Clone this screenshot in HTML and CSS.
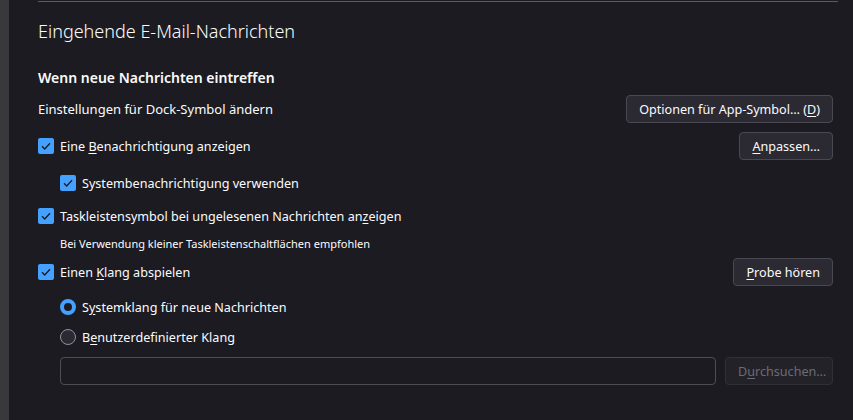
FILE: index.html
```html
<!DOCTYPE html>
<html lang="de">
<head>
<meta charset="utf-8">
<title>Einstellungen</title>
<link rel="stylesheet" href="styles.css">
</head>
<body>
<div class="sidebar"></div>
<main class="pane">
  <div class="rule"></div>
  <h1 class="title">Eingehende E-Mail-Nachrichten</h1>
  <h2 class="subtitle">Wenn neue Nachrichten eintreffen</h2>

  <div class="row r-dock">
    <span class="label">Einstellungen für Dock-Symbol ändern</span>
    <button class="btn">Optionen für App-Symbol… (<u>D</u>)</button>
  </div>

  <div class="row r-alert">
    <label class="check"><span class="box"><svg viewBox="0 0 16 16"><path d="M4 8.2l2.7 2.8L12 5.2"/></svg></span><span class="text">Eine <u>B</u>enachrichtigung anzeigen</span></label>
    <button class="btn"><u>A</u>npassen…</button>
  </div>

  <div class="row r-sys indent">
    <label class="check"><span class="box"><svg viewBox="0 0 16 16"><path d="M4 8.2l2.7 2.8L12 5.2"/></svg></span><span class="text">Systembenachrichtigung verwenden</span></label>
  </div>

  <div class="row r-task">
    <label class="check"><span class="box"><svg viewBox="0 0 16 16"><path d="M4 8.2l2.7 2.8L12 5.2"/></svg></span><span class="text">Taskleistensymbol bei ungelesenen Nachrichten an<u>z</u>eigen</span></label>
  </div>

  <div class="hint">Bei Verwendung kleiner Taskleistenschaltflächen empfohlen</div>

  <div class="row r-sound">
    <label class="check"><span class="box"><svg viewBox="0 0 16 16"><path d="M4 8.2l2.7 2.8L12 5.2"/></svg></span><span class="text">Einen <u>K</u>lang abspielen</span></label>
    <button class="btn"><u>P</u>robe hören</button>
  </div>

  <div class="row r-radio1 indent">
    <label class="radio"><span class="dot on"></span><span class="text">S<u>y</u>stemklang für neue Nachrichten</span></label>
  </div>

  <div class="row r-radio2 indent">
    <label class="radio"><span class="dot"></span><span class="text">B<u>e</u>nutzerdefinierter Klang</span></label>
  </div>

  <div class="row r-file indent">
    <input class="field" type="text">
    <button class="btn off" disabled>D<u>u</u>rchsuchen…</button>
  </div>
</main>
</body>
</html>
```

FILE: styles.css
```css
html, body {
  margin: 0;
  height: 100%;
}

body {
  display: flex;
  background: #1c1b22;
  color: #fbfbfe;
  font-family: "Noto Sans", "Open Sans", sans-serif;
  font-size: 13px;
  overflow: hidden;
}

.sidebar {
  width: 9px;
  flex: none;
  background: #38383d;
}

.pane {
  flex: 1;
  padding: 0 20px 0 29px;
}

.rule {
  margin: 1px -5px 0 0;
  height: 1px;
  background: #5b5b66;
}

.title {
  margin: 16px 0 0;
  font-size: 18px;
  font-weight: 300;
  line-height: 26px;
}

.subtitle {
  margin: 24px 0 0;
  font-size: 14px;
  font-weight: 600;
  line-height: 20px;
}

.row {
  display: flex;
  align-items: center;
  justify-content: space-between;
  height: 20px;
}

.indent {
  padding-left: 22px;
}

.r-dock  { margin-top: 7px;  height: 28px; }
.r-alert { margin-top: 9px;  height: 28px; }
.r-sys   { margin-top: 13px; }
.r-task  { margin-top: 13px; }
.r-sound { margin-top: 6px;  height: 28px; }
.r-radio1 { margin-top: 11px; }
.r-radio2 { margin-top: 10px; }
.r-file  { margin-top: 10px; height: 28px; gap: 9px; }

.hint {
  margin: 10px 0 0 22px;
  height: 16px;
  line-height: 16px;
  font-size: 11px;
}

u {
  text-decoration: underline;
  text-underline-offset: 2px;
}

.check, .radio {
  display: flex;
  align-items: center;
}

.text {
  font-size: 12.6px;
}

.box {
  width: 16px;
  height: 16px;
  border-radius: 2px;
  background: #45a1ff;
  margin-right: 6px;
  display: flex;
}

.box svg {
  width: 16px;
  height: 16px;
  fill: none;
  stroke: #1c1b22;
  stroke-width: 1.3;
}

.dot {
  width: 16px;
  height: 16px;
  box-sizing: border-box;
  border-radius: 50%;
  border: 1px solid #8f8f9d;
  background: #2b2a33;
  margin-right: 6px;
}

.dot.on {
  border: 4px solid #45a1ff;
  background: #1c1b22;
}

.btn {
  height: 28px;
  padding: 0 12px;
  border: 1px solid #4a4951;
  border-radius: 4px;
  background: #2b2a33;
  color: #fbfbfe;
  font: inherit;
  font-size: 12.6px;
}

.btn.off {
  background: #232229;
  border-color: #303037;
  color: #6d6c73;
  width: 108px;
}

.field {
  flex: 1;
  height: 28px;
  box-sizing: border-box;
  border: 1px solid #4e4d55;
  border-radius: 4px;
  background: #1c1b22;
  color: #fbfbfe;
  font: inherit;
}
```
